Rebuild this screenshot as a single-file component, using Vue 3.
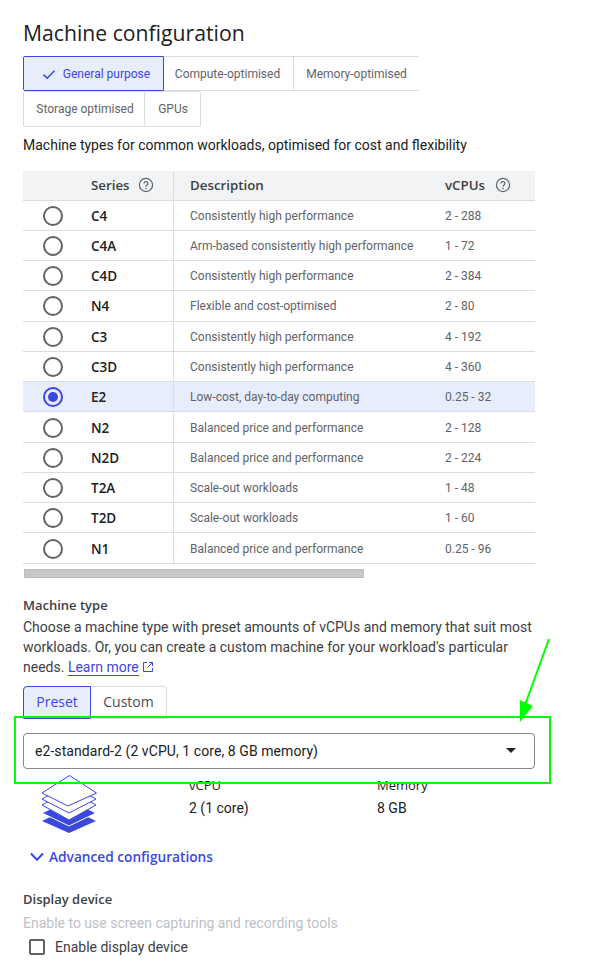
<script setup>
const rows = [
  { series: 'C4', desc: 'Consistently high performance', vcpus: '2 - 288' },
  { series: 'C4A', desc: 'Arm-based consistently high performance', vcpus: '1 - 72' },
  { series: 'C4D', desc: 'Consistently high performance', vcpus: '2 - 384' },
  { series: 'N4', desc: 'Flexible and cost-optimised', vcpus: '2 - 80' },
  { series: 'C3', desc: 'Consistently high performance', vcpus: '4 - 192' },
  { series: 'C3D', desc: 'Consistently high performance', vcpus: '4 - 360' },
  { series: 'E2', desc: 'Low-cost, day-to-day computing', vcpus: '0.25 - 32', selected: true },
  { series: 'N2', desc: 'Balanced price and performance', vcpus: '2 - 128' },
  { series: 'N2D', desc: 'Balanced price and performance', vcpus: '2 - 224' },
  { series: 'T2A', desc: 'Scale-out workloads', vcpus: '1 - 48' },
  { series: 'T2D', desc: 'Scale-out workloads', vcpus: '1 - 60' },
  { series: 'N1', desc: 'Balanced price and performance', vcpus: '0.25 - 96' },
]
</script>

<template>
  <div class="page">
    <h1 class="title">Machine configuration</h1>

    <div class="family-tabs">
      <div class="tab-row">
        <div class="tab active first-tab">
          <svg class="check" viewBox="0 0 16 16" width="16" height="16">
            <path d="M2.5 8.6 6.2 12.2 13.5 4.8" fill="none" stroke="#3b48e0" stroke-width="1.6" />
          </svg>
          General purpose
        </div>
        <div class="tab compute-tab">Compute-optimised</div>
        <div class="tab memory-tab">Memory-optimised</div>
      </div>
      <div class="tab-row second-row">
        <div class="tab storage-tab">Storage optimised</div>
        <div class="tab gpu-tab">GPUs</div>
      </div>
    </div>

    <p class="family-desc">Machine types for common workloads, optimised for cost and flexibility</p>

    <div class="series-table">
      <div class="table-row table-head">
        <div class="cell-radio"></div>
        <div class="cell-series">
          Series
          <svg class="help" viewBox="0 0 16 16" width="16" height="16">
            <circle cx="8" cy="8" r="6.6" fill="none" stroke="#5f6368" stroke-width="1.2" />
            <path d="M6.1 6.4a1.9 1.9 0 1 1 3 1.6c-.7.5-1.1.9-1.1 1.7" fill="none" stroke="#5f6368" stroke-width="1.2" />
            <circle cx="8" cy="11.5" r=".8" fill="#5f6368" />
          </svg>
        </div>
        <div class="cell-desc">Description</div>
        <div class="cell-vcpus">
          vCPUs
          <svg class="help" viewBox="0 0 16 16" width="16" height="16">
            <circle cx="8" cy="8" r="6.6" fill="none" stroke="#5f6368" stroke-width="1.2" />
            <path d="M6.1 6.4a1.9 1.9 0 1 1 3 1.6c-.7.5-1.1.9-1.1 1.7" fill="none" stroke="#5f6368" stroke-width="1.2" />
            <circle cx="8" cy="11.5" r=".8" fill="#5f6368" />
          </svg>
        </div>
      </div>
      <div v-for="row in rows" :key="row.series" class="table-row body-row" :class="{ selected: row.selected }">
        <div class="cell-radio">
          <span class="radio"><span v-if="row.selected" class="radio-dot"></span></span>
        </div>
        <div class="cell-series">{{ row.series }}</div>
        <div class="cell-desc">{{ row.desc }}</div>
        <div class="cell-vcpus">{{ row.vcpus }}</div>
      </div>
    </div>
    <div class="scrollbar"></div>

    <h2 class="section-label type-label">Machine type</h2>
    <p class="type-desc">
      Choose a machine type with preset amounts of vCPUs and memory that suit most workloads. Or, you can create a custom machine for your workload's particular needs.
      <a class="learn">Learn more</a><svg class="external" viewBox="0 0 12 12" width="12" height="12">
        <path d="M5 1.5H1.5v9h9V7M7 1.5h3.5V5M10.5 1.5 5.5 6.5" fill="none" stroke="#3b48e0" stroke-width="1" />
      </svg>
    </p>

    <div class="type-tabs">
      <div class="type-tab type-active">Preset</div>
      <div class="type-tab type-custom">Custom</div>
    </div>

    <div class="select">
      <span>e2-standard-2 (2 vCPU, 1 core, 8 GB memory)</span>
      <span class="select-arrow"></span>
    </div>

    <div class="specs">
      <svg class="stack" viewBox="0 0 58 60" width="58" height="60">
        <path d="M29 33 56 46 29 58 2 46Z" fill="#3b48e0" />
        <path d="M29 25 56 38 29 51 2 38Z" fill="#3b48e0" stroke="#fff" stroke-width="1" />
        <path d="M29 15 56 30 29 45 2 30Z" fill="#fff" stroke="#3b48e0" stroke-width="1" />
        <path d="M29 9 56 24 29 38 2 24Z" fill="#fff" stroke="#3b48e0" stroke-width="1" />
        <path d="M29.5 .5 56.5 18 28 31 2 18Z" fill="#fff" stroke="#3b48e0" stroke-width="1" />
      </svg>
      <div class="spec vcpu-spec">
        <div class="spec-label">vCPU</div>
        <div class="spec-value">2 (1 core)</div>
      </div>
      <div class="spec">
        <div class="spec-label">Memory</div>
        <div class="spec-value">8 GB</div>
      </div>
    </div>

    <div class="advanced">
      <svg viewBox="0 0 14 10" width="14" height="10">
        <path d="M1 1.5 7 7.8 13 1.5" fill="none" stroke="#3b48e0" stroke-width="2" />
      </svg>
      Advanced configurations
    </div>

    <h2 class="section-label display-label">Display device</h2>
    <p class="display-desc">Enable to use screen capturing and recording tools</p>
    <div class="checkbox-row">
      <span class="checkbox"></span>
      Enable display device
    </div>

    <!-- annotation drawn over the screenshot -->
    <svg class="annotation" viewBox="0 0 602 974" width="602" height="974">
      <rect x="15" y="717" width="535" height="66" fill="none" stroke="#00ff00" stroke-width="2" />
      <path d="M549 639 525 705" fill="none" stroke="#00ff00" stroke-width="2" />
      <path d="M520 700 533 706 520 722Z" fill="#00ff00" />
    </svg>
  </div>
</template>

<style>
html, body {
  margin: 0;
  background: #fff;
}
</style>

<style scoped>
.page {
  position: relative;
  width: 602px;
  height: 974px;
  padding: 20px 0 0 23px;
  box-sizing: border-box;
  overflow: hidden;
  font-family: Roboto, "Liberation Sans", sans-serif;
  color: #202124;
}

.title {
  margin: 0;
  height: 36px;
  font-family: "Open Sans", sans-serif;
  font-size: 21.2px;
  line-height: 26px;
  font-weight: 400;
}

.tab-row {
  display: flex;
  height: 35px;
}

.second-row {
  height: 36px;
}

.tab {
  display: flex;
  align-items: center;
  justify-content: center;
  box-sizing: border-box;
  font-size: 12px;
  color: #5f6368;
  border: 1px solid #dadce0;
  border-left: 0;
}

.first-tab {
  width: 141px;
  gap: 6px;
  padding-right: 4px;
  border: 1px solid #3b48e0;
  border-radius: 2px 0 0 2px;
  background: #e8edfc;
  color: #3b48e0;
}

.check {
  margin-left: 8px;
}

.compute-tab {
  width: 130px;
  padding-right: 2px;
}

.memory-tab {
  width: 125px;
  border-right: 0;
}

.storage-tab {
  width: 122px;
  padding-left: 2px;
  border-left: 1px solid #dadce0;
  border-radius: 2px 0 0 2px;
}

.gpu-tab {
  width: 56px;
  padding-left: 1px;
  border-radius: 0 2px 2px 0;
}

.family-desc {
  margin: 9px 0 0;
  height: 35px;
  font-size: 14px;
  line-height: 18px;
}

.series-table {
  width: 512px;
}

.table-row {
  display: flex;
  box-sizing: border-box;
  border-bottom: 1px solid #dadce0;
  font-size: 12px;
  color: #5f6368;
}

.body-row {
  height: 30.27px;
  padding-top: 1px;
}

.table-head {
  height: 29.54px;
  padding-bottom: 1px;
  background: #f1f3f4;
  font-family: "Open Sans", sans-serif;
  font-size: 13.3px;
  font-weight: 600;
  color: #3c4043;
}

.selected {
  background: #e8edfc;
}

.table-row > div {
  display: flex;
  align-items: center;
}

.cell-radio {
  width: 68px;
  padding-left: 20px;
  box-sizing: border-box;
}

.cell-series {
  width: 82px;
  gap: 8px;
  font-family: "Open Sans", sans-serif;
  font-size: 13.5px;
  font-weight: 600;
  color: #202124;
}

.table-head .cell-series,
.table-head .cell-vcpus {
  font-size: 13.3px;
  font-weight: 600;
  color: #3c4043;
}

.cell-desc {
  width: 255px;
  padding-left: 16px;
  border-left: 1px solid #dadce0;
}

.cell-vcpus {
  gap: 10px;
}

.radio {
  display: flex;
  align-items: center;
  justify-content: center;
  width: 20px;
  height: 20px;
  box-sizing: border-box;
  border: 2px solid #5f6368;
  border-radius: 50%;
}

.selected .radio {
  border-color: #3b48e0;
}

.radio-dot {
  width: 10px;
  height: 10px;
  border-radius: 50%;
  background: #3b48e0;
}

.scrollbar {
  width: 340px;
  height: 9px;
  margin: 5.46px 0 0 1px;
  box-sizing: border-box;
  background: #c8c8c8;
  border: 1px solid #bdbdbd;
}

.section-label {
  margin: 0;
  font-family: "Open Sans", sans-serif;
  font-size: 13px;
  line-height: 16px;
  font-weight: 600;
  color: #3c4043;
}

.type-label {
  margin-top: 19px;
}

.type-desc {
  width: 515px;
  margin: 3.4px 0 0;
  font-size: 14px;
  line-height: 20.3px;
  color: #3c4043;
}

.learn {
  color: #3b48e0;
  border-bottom: 1px solid #3b48e0;
}

.external {
  margin-left: 3px;
  vertical-align: -1px;
}

.type-tabs {
  display: flex;
  height: 33px;
  margin-top: 8.2px;
}

.type-tab {
  display: flex;
  align-items: center;
  justify-content: center;
  padding-bottom: 2px;
  box-sizing: border-box;
  font-family: "Open Sans", sans-serif;
  font-size: 14px;
  font-weight: 500;
  color: #4a4e52;
  border: 1px solid #dadce0;
}

.type-active {
  width: 68px;
  border-color: #3b48e0;
  background: #e8edfc;
  color: #3b48e0;
  border-radius: 4px 0 0 0;
}

.type-custom {
  width: 76px;
  border-left: 0;
  border-radius: 0 4px 0 0;
}

.select {
  display: flex;
  align-items: center;
  justify-content: space-between;
  width: 512px;
  height: 36px;
  margin-top: 14px;
  padding: 0 18px 0 11px;
  box-sizing: border-box;
  border: 1px solid #80868b;
  border-radius: 4px;
  font-size: 14px;
  letter-spacing: .07px;
}

.select-arrow {
  width: 0;
  height: 0;
  border-left: 5px solid transparent;
  border-right: 5px solid transparent;
  border-top: 5px solid #202124;
}

.specs {
  display: flex;
  height: 66px;
  margin-top: 6px;
  font-size: 14px;
}

.stack {
  margin-left: 17px;
  flex: none;
}

.spec {
  width: 188px;
}

.vcpu-spec {
  margin-left: 91px;
}

.spec-label {
  font-family: "Open Sans", sans-serif;
  font-size: 13px;
  font-weight: 500;
  line-height: 20px;
}

.spec-value {
  margin-top: 3px;
  line-height: 20px;
}

.advanced {
  display: flex;
  align-items: center;
  gap: 5px;
  margin: 6px 0 0 7px;
  height: 20px;
  font-family: "Open Sans", sans-serif;
  font-size: 13.7px;
  font-weight: 600;
  color: #3b48e0;
}

.display-label {
  margin-top: 24px;
}

.display-desc {
  margin: 7px 0 0;
  font-size: 14px;
  line-height: 18px;
  color: #bdc1c6;
}

.checkbox-row {
  display: flex;
  align-items: center;
  gap: 10px;
  margin: 6px 0 0 6px;
  font-size: 14px;
  line-height: 18px;
  color: #3c4043;
}

.checkbox {
  width: 16px;
  height: 16px;
  box-sizing: border-box;
  border: 2px solid #5f6368;
  border-radius: 2px;
}

.annotation {
  position: absolute;
  left: 0;
  top: 0;
  pointer-events: none;
}
</style>
